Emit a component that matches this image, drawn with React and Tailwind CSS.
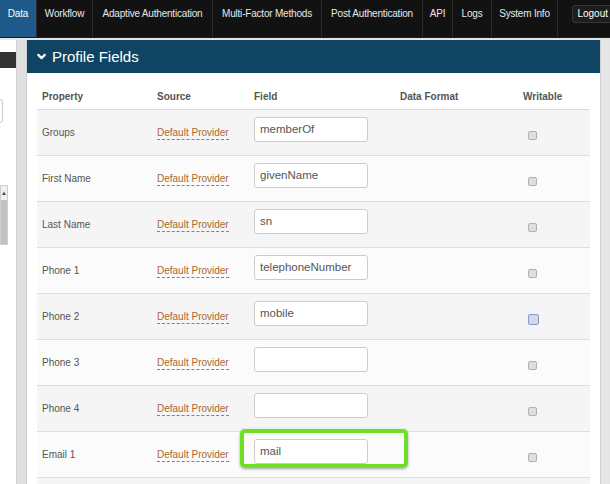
import { ChevronDown } from "lucide-react";

const tabs = [
    { name: "Data", w: "w-[37px]" },
    { name: "Workflow", w: "w-[56px]" },
    { name: "Adaptive Authentication", w: "w-[120px]" },
    { name: "Multi-Factor Methods", w: "w-[109px]" },
    { name: "Post Authentication", w: "w-[101px]" },
    { name: "API", w: "w-[30px]" },
    { name: "Logs", w: "w-[39px]" },
    { name: "System Info", w: "w-[66px]" },
];

const rows = [
    { label: "Groups", field: "memberOf" },
    { label: "First Name", field: "givenName" },
    { label: "Last Name", field: "sn" },
    { label: "Phone 1", field: "telephoneNumber" },
    { label: "Phone 2", field: "mobile", focused: true },
    { label: "Phone 3", field: "" },
    { label: "Phone 4", field: "" },
    { label: "Email 1", field: "mail", highlight: true },
    { label: "", field: "" },
];

const Checkbox = ({ focused }) => (
    <span
        className={`block mt-[5px] ml-[5px] rounded-[2px] ${
            focused
                ? "w-[11px] h-[11px] border border-[#7f9bd6] bg-[#d4d8e0]"
                : "w-[9px] h-[9px] border border-[#b0b0b0] bg-[#dedede]"
        }`}
    />
);

const App = () => {
    return (
        <div
            className="w-[610px] h-[484px] overflow-hidden bg-[#e4e4e4] flex flex-col"
            style={{ fontFamily: '"Liberation Sans", Arial, sans-serif' }}
        >
            {/* top nav */}
            <div className="h-[38px] bg-[#121212] flex items-start shrink-0 border-b border-[#1c1c1c]">
                {tabs.map((tab, i) => (
                    <div
                        key={tab.name}
                        className={`${tab.w} h-full pt-[8px] text-center text-[10px] leading-[12px] tracking-[-0.2px] border-r border-[#2c2c2c] whitespace-nowrap ${
                            i === 0 ? "bg-[#1d5a89] text-white" : "text-[#e8e8e8]"
                        }`}
                    >
                        {tab.name}
                    </div>
                ))}
                <div className="flex-1" />
                <button className="mt-[5px] h-[18px] px-[4px] -mr-[3px] bg-[#1e1e1e] border border-[#353535] rounded-[3px] text-[10px] text-white leading-none">
                    Logout
                </button>
            </div>

            <div className="flex flex-1 pt-[2px] min-h-0">
                {/* clipped left panel */}
                <div className="w-[17px] shrink-0 bg-white pt-[12px] overflow-hidden border-r border-[#d0d0d0]">
                    <div className="h-[16px] bg-[#333]" />
                    <div className="mt-[31px] -ml-[37px] w-[40px] h-[24px] border border-[#ccc] rounded-[3px] bg-white" />
                    <div className="mt-[62px] w-[8px] border border-[#cfcfcf] bg-[#f0f0f0]">
                        <div className="h-[14px] text-[6px] leading-[14px] text-center text-[#444]">▲</div>
                        <div className="h-[44px] bg-[#c2c2c2]" />
                    </div>
                </div>
                <div className="w-[10px] shrink-0 bg-[#e0e0e0] border-r border-[#cfcfcf]" />

                {/* main panel */}
                <div className="flex-1 bg-white border-r border-[#cfcfcf] flex flex-col min-w-0">
                    <div className="h-[33px] shrink-0 bg-[#0f4462] flex items-center pl-[8px] text-white">
                        <ChevronDown size={13} strokeWidth={4} className="mr-[4px]" />
                        <span className="text-[15px] leading-none">Profile Fields</span>
                    </div>

                    <div className="px-[10px] pt-[10px]">
                        <div className="grid grid-cols-[115px_97px_146px_123px_1fr] h-[27px] items-center text-[10px] font-bold text-[#555] border-b border-[#ddd]">
                            <div className="px-[5px]">Property</div>
                            <div className="px-[5px]">Source</div>
                            <div className="px-[5px]">Field</div>
                            <div className="px-[5px]">Data Format</div>
                            <div className="px-[5px]">Writable</div>
                        </div>

                        {rows.map((row, i) => (
                            <div
                                key={i}
                                className={`relative grid grid-cols-[115px_97px_146px_123px_1fr] h-[46px] items-center border-b border-[#dedede] text-[10px] text-[#555] ${
                                    i % 2 === 0 ? "bg-[#f5f5f5]" : "bg-[#fbfbfb]"
                                }`}
                            >
                                <div className="px-[5px]">{row.label}</div>
                                <div className="px-[5px]">
                                    {row.label && (
                                        <span className="text-[#a9692d] border-b border-dashed border-[#4a92cc] pb-[1px]">
                                            Default Provider
                                        </span>
                                    )}
                                </div>
                                <div className="px-[5px] mb-[6px]">
                                    <div className="w-[114px] h-[25px] border border-[#cccccc] rounded-[3px] bg-white px-[5px] flex items-center text-[11.5px] text-[#555]">
                                        {row.field}
                                    </div>
                                </div>
                                <div />
                                <div className="px-[5px]">
                                    {row.label && <Checkbox focused={row.focused} />}
                                </div>
                                {row.highlight && (
                                    <div className="absolute left-[203px] -top-[3px] w-[168px] h-[39px] border-[4px] border-[#6be024] rounded-[5px] shadow-[0_1px_3px_rgba(0,0,0,0.35)] pointer-events-none" />
                                )}
                            </div>
                        ))}
                    </div>
                </div>
                <div className="w-[9px] shrink-0 bg-[#e6e6e6]" />
            </div>
        </div>
    );
};

export default App;
